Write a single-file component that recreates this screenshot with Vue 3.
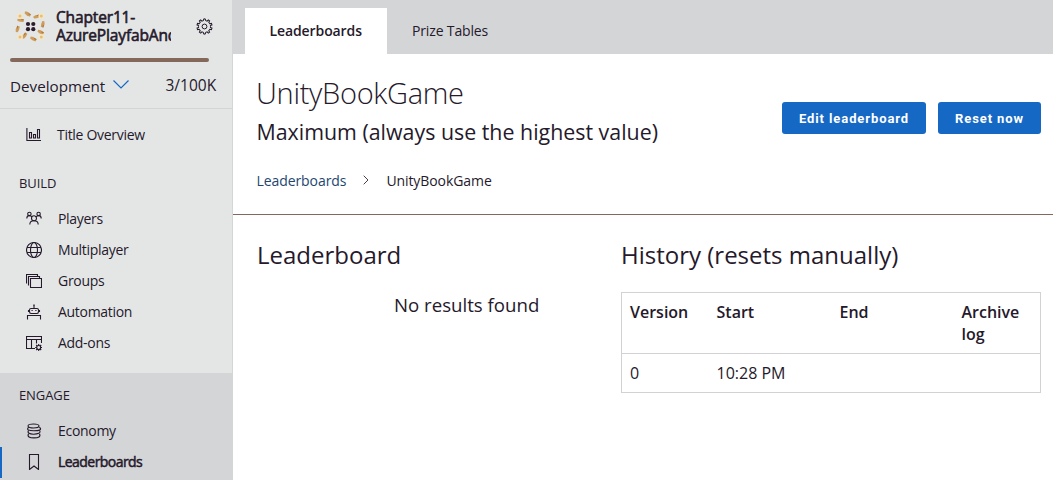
<script setup>
const overview = {
  label: 'Title Overview',
  paths: ['M.9 1v12.500H15', 'M3.500 5.500h2v5.500h-2z', 'M7.500 7.500h2v3.500h-2z', 'M11.500 2.500h2v8.500h-2z'],
}
const build = [
  {
    label: 'Players',
    paths: ['M.8 7.500c0-2 1-2.900 2.500-2.900S5.500 5.300 6 6', 'M15.200 7.500c0-2-1-2.900-2.500-2.900s-2.200.7-2.700 1.400', 'M1.700 2.900a1.700 1.700 0 1 0 3.400 0a1.700 1.700 0 1 0-3.400 0', 'M10.900 2.900a1.700 1.700 0 1 0 3.400 0a1.700 1.700 0 1 0-3.400 0', 'M5.500 7.300a2.500 2.500 0 1 0 5 0a2.500 2.500 0 1 0-5 0', 'M3.800 13.500c0-2.500 1.700-3.700 4.200-3.700s4.200 1.200 4.200 3.700'],
  },
  {
    label: 'Multiplayer',
    paths: ['M.5 8a7.500 7.500 0 1 0 15 0a7.500 7.500 0 1 0-15 0', 'M4.500 8a3.500 7.500 0 1 0 7 0a3.500 7.500 0 1 0-7 0', 'M1 5.500h14M1 10.500h14'],
  },
  {
    label: 'Groups',
    paths: ['M4.500 5.500h11v9h-11z', 'M2.500 12.500v-9h11v2', 'M.5 10.500v-9h11v2'],
  },
  {
    label: 'Automation',
    paths: ['M8 1v3', 'M5 4.500h6c1 0 1.500.5 1.500 1.500v1.500c0 1-.5 2-1.500 2H5c-1 0-1.500-1-1.500-2V6c0-1 .5-1.500 1.500-1.500z', 'M2.500 6v2M13.500 6v2', 'M5.500 6.500h1.200M9.300 6.500h1.200', 'M1.500 15.500v-4h13v4', 'M7.300 1h1.400'],
  },
  {
    label: 'Add-ons',
    paths: ['M9 13.500H.5v-12h15v6.500', 'M.5 4.500h15M5.500 4.500v9M10.500 4.500v4', 'M10.700 12.500a2 2 0 1 0 4 0a2 2 0 1 0-4 0', 'M12.700 9v1.500M12.700 14.500V16M9.200 12.500h1.500M14.700 12.500h1.500M10.200 10l1 1M14.200 14l1 1M15.200 10l-1 1M11.200 14l-1 1'],
  },
]
const engage = [
  {
    label: 'Economy',
    paths: ['M2 3c0-2.600 11-2.600 11 0s-11 2.600-11 0z', 'M2.800 4.200c-3 2.500 0 3.500 5 3.500s9-1 5.500-3.500', 'M2.500 7.200c-1.500 3 1 4 5 4s8-1 6-4', 'M2.500 10.700c-1.500 3 1 4.200 5.500 4.200s7-1.200 5.500-4.200'],
  },
  {
    label: 'Leaderboards', active: true,
    paths: ['M3.500.5h9v15L8 12 3.500 15.500z'],
  },
]
const teeth = Array.from({ length: 10 }, (_, i) => i * 36)
const dancers = [
  [12.7, 4, 25], [21.7, 6.7, -25], [27.7, 14.3, 95], [25.7, 22.3, 20],
  [18.3, 29, 20], [9.7, 25.7, -65], [2.7, 19, -80], [5.7, 10.3, 0],
]
const lamps = [[5, 6], [26.3, 6], [26.3, 27], [5, 27]]
const dots = [[13, 14], [18.3, 14], [13, 19.200], [18.3, 19.200]]
</script>

<template>
  <div class="page">
    <aside class="sidebar">
      <header class="title-head">
        <div class="title-row">
          <svg class="logo" viewBox="0 0 31 33">
            <g v-for="d in dancers" :key="d[0]" :transform="`translate(${d[0]} ${d[1]}) rotate(${d[2]})`">
              <path d="M-3.300-1.400L-.5-1.900 3.200-1 2.900 1.600-.5 1.500-3.200.6z" fill="#cf9c5b" />
              <path d="M.5-.7L3-.5" stroke="#a9763f" />
            </g>
            <circle v-for="l in lamps" :key="l.join()" :cx="l[0]" :cy="l[1]" r="2.200" fill="#e6bf7c" stroke="#f4e6c2" stroke-width="1.400" />
            <circle v-for="d in dots" :key="d.join()" :cx="d[0]" :cy="d[1]" r="2.100" fill="#2b1b2b" />
          </svg>
          <div class="title-name">Chapter11-<br />AzurePlayfabAnd</div>
          <svg class="gear" viewBox="0 0 17 17">
            <path v-for="a in teeth" :key="a" :transform="`rotate(${a} 8.5 8.5)`" d="M6.600 2.800L7.500 2.600 7.700.9h1.600L9.500 2.600l.9.200" />
            <circle cx="8.5" cy="8.5" r="2.400" />
          </svg>
        </div>
        <div class="meter"></div>
        <div class="env">
          <span class="env-name">Development</span>
          <svg class="chev" viewBox="0 0 16 9"><path d="M.5.5L8 8 15.500.5" /></svg>
          <span class="quota">3/100K</span>
        </div>
      </header>
      <nav>
        <a class="item overview">
          <svg class="icon" viewBox="0 0 16 16"><path v-for="p in overview.paths" :key="p" :d="p" /></svg>
          <span>{{ overview.label }}</span>
        </a>
        <h4 class="group">BUILD</h4>
        <a v-for="i in build" :key="i.label" class="item">
          <svg class="icon" viewBox="0 0 16 16"><path v-for="p in i.paths" :key="p" :d="p" /></svg>
          <span>{{ i.label }}</span>
        </a>
        <section class="engage">
          <h4 class="group">ENGAGE</h4>
          <a v-for="i in engage" :key="i.label" class="item" :class="{ active: i.active }">
            <svg class="icon" viewBox="0 0 16 16"><path v-for="p in i.paths" :key="p" :d="p" /></svg>
            <span>{{ i.label }}</span>
          </a>
        </section>
      </nav>
    </aside>
    <main class="main">
      <div class="tabs">
        <a class="tab on">Leaderboards</a>
        <a class="tab">Prize Tables</a>
      </div>
      <div class="hero">
        <div>
          <h1>UnityBookGame</h1>
          <p class="sub">Maximum (always use the highest value)</p>
          <div class="crumbs">
            <a>Leaderboards</a>
            <svg viewBox="0 0 6 10"><path d="M.7.7L5 5 .7 9.300" /></svg>
            <span>UnityBookGame</span>
          </div>
        </div>
        <div class="actions">
          <button class="edit">Edit leaderboard</button>
          <button class="reset">Reset now</button>
        </div>
      </div>
      <div class="content">
        <section class="board">
          <h2>Leaderboard</h2>
          <p class="empty">No results found</p>
        </section>
        <section class="history">
          <h2>History (resets manually)</h2>
          <table>
            <colgroup><col class="c1" /><col class="c2" /><col class="c3" /><col /></colgroup>
            <thead><tr><th>Version</th><th>Start</th><th>End</th><th>Archive log</th></tr></thead>
            <tbody><tr><td>0</td><td>10:28 PM</td><td></td><td></td></tr></tbody>
          </table>
        </section>
      </div>
    </main>
  </div>
</template>

<style>
body { margin: 0; background: #fff; overflow: hidden; }
</style>

<style scoped>
* { box-sizing: border-box; }
.page { display: flex; width: 1053px; height: 480px; overflow: hidden; font-family: "Open Sans", "Noto Sans", sans-serif; color: #25192b; background: #fff; }
h1, h2, h4, p { margin: 0; }
svg { fill: none; flex: none; }
.sidebar { width: 233px; flex: none; background: #e4e6e6; border-right: 1px solid #d4d5d7; }
.title-head { height: 109px; border-bottom: 1px solid #d2d4d5; }
.title-row { display: flex; height: 58px; padding: 9px 0 0 15px; }
.logo { width: 31px; height: 33px; margin-top: 1px; overflow: visible; }
.title-name { width: 115px; margin-left: 10px; overflow: hidden; white-space: nowrap; font-size: 15.500px; line-height: 18px; letter-spacing: -.15px; height: 42px; margin-top: -1px; -webkit-text-stroke: .6px #25192b; }
.gear { width: 17px; height: 17px; margin: 9px 0 0 25px; stroke: #25192b; stroke-width: 1; }
.meter { height: 4px; width: 199px; margin-left: 10px; border-radius: 2px; background: #85685c; }
.env { display: flex; align-items: center; height: 44px; padding-left: 10px; font-size: 15.200px; }
.env-name { width: 95px; padding-top: 3px; }
.chev { width: 16px; height: 9px; margin-left: 8px; stroke: #1668c5; stroke-width: 1.200; }
.quota { margin-left: 36.500px; padding-top: 2px; font-size: 15.500px; }
.item { display: flex; align-items: flex-start; height: 31px; padding-left: 26px; font-size: 14px; line-height: 30px; letter-spacing: -.3px; }
.icon { width: 16px; height: 16px; margin: 7px 16px 0 0; stroke: #25192b; stroke-width: 1.100; }
.overview { margin-top: 11px; }
.overview .icon { margin-right: 15px; }
.group { padding-left: 19px; font-size: 13px; font-weight: 400; line-height: 20px; margin: 22px 0 11px; letter-spacing: -.1px; }
.engage { height: 107px; margin-top: 14px; padding-top: 12px; background: #d4d5d7; }
.engage .group { margin: 0 0 11px; }
.active { border-left: 2px solid #1668c5; padding-left: 24px; letter-spacing: -.55px; -webkit-text-stroke: .5px #25192b; }
.main { flex: 1; min-width: 0; }
.tabs { display: flex; height: 54px; padding: 8px 0 0 12px; background: #d4d5d7; }
.tab { height: 46px; padding: 0 25px; font-size: 14px; line-height: 46px; letter-spacing: -.15px; }
.on { width: 142px; padding-left: 24.500px; background: #fff; font-weight: 600; white-space: nowrap; letter-spacing: -.1px; }
.hero { display: flex; justify-content: space-between; height: 161px; padding: 19px 12px 0 23.500px; border-bottom: 1px solid #85685c; }
h1 { font-size: 29px; line-height: 39px; font-weight: 300; letter-spacing: -.3px; margin-left: -.5px; }
.sub { font-size: 21.380px; line-height: 36px; margin-top: 2px; }
.crumbs { display: flex; align-items: center; height: 22px; margin-top: 19px; font-size: 14px; letter-spacing: -.08px; }
.crumbs a { color: #23466f; }
.crumbs svg { width: 6px; height: 10px; margin: 0 17px; stroke: #4c4040; }
.actions { display: flex; gap: 12px; margin-top: 29px; height: 32px; }
button { border: 0; padding: 0; border-radius: 3px; background: #1668c5; color: #fff; font: 700 13px Roboto, sans-serif; letter-spacing: .9px; white-space: nowrap; }
.edit { width: 144px; }
.reset { width: 103px; }
.content { display: flex; padding: 22px 12px 0 24px; }
.board { width: 364px; }
.history { width: 420px; }
h2 { font-size: 24px; line-height: 36px; font-weight: 400; }
.empty { margin: 18px 0 0 137px; font-size: 18.650px; line-height: 28px; }
table { width: 420px; margin-top: 19px; border-collapse: collapse; table-layout: fixed; border: 1px solid #d2d2d4; font-size: 16px; line-height: 22px; }
.c1 { width: 87px; }
.c2 { width: 123px; }
.c3 { width: 122px; }
th, td { text-align: left; vertical-align: top; padding: 8px; }
th { height: 61px; font-weight: 600; border-bottom: 1px solid #d2d2d4; }
th:last-child { padding-right: 10px; }
td { height: 39px; }
</style>
